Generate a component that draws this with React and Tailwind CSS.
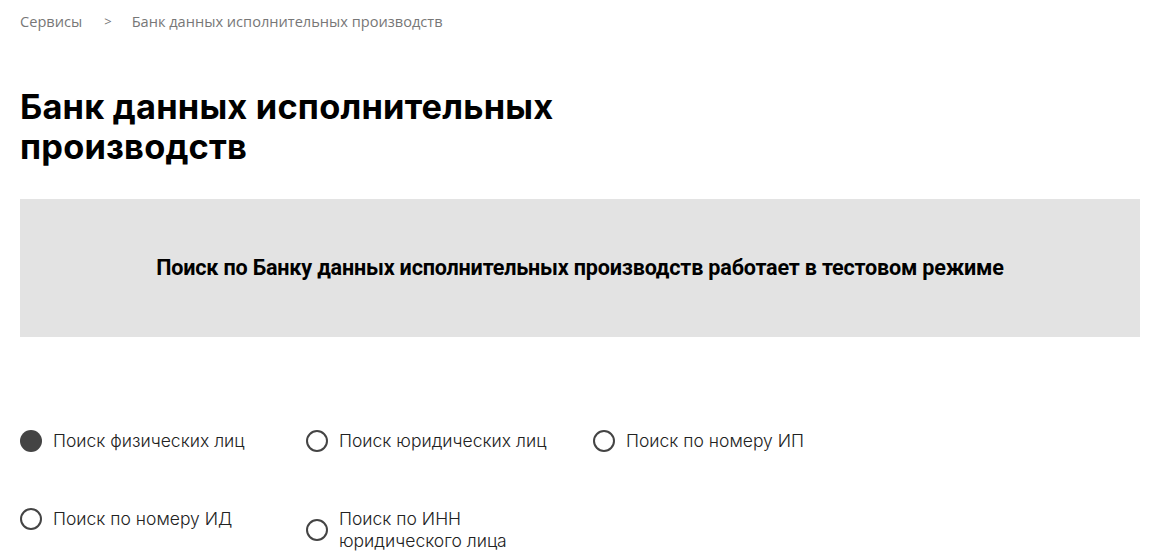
import React from "react";

function Radio({ checked, label }) {
  return (
    <label className="flex items-center gap-[11px] cursor-pointer">
      <span
        className={
          "w-[22px] h-[22px] shrink-0 rounded-full " +
          (checked ? "bg-[#444444]" : "border-2 border-[#444444] bg-white")
        }
      />
      <span className="text-[17.5px] leading-[22px] text-[#222222] font-light [font-family:Inter,'Noto_Sans',sans-serif]">
        {label}
      </span>
    </label>
  );
}

export default function App() {
  return (
    <div className="w-[1160px] h-[560px] bg-white overflow-hidden px-5">
      <nav className="flex items-center pt-[11px] text-[14.6px] leading-[20px] text-[#777777] [font-family:'Open_Sans',sans-serif]">
        <span>Сервисы</span>
        <span className="ml-[22px] mr-[20px] text-[13px]">&gt;</span>
        <span>Банк данных исполнительных производств</span>
      </nav>

      <h1 className="mt-[56px] text-[34.4px] leading-[40px] font-bold text-black [font-family:Inter,sans-serif] w-[580px] tracking-[0.2px]">
        Банк данных исполнительных производств
      </h1>

      <div className="mt-[32px] h-[138px] bg-[#e3e3e3] flex items-center justify-center">
        <p className="text-[21.6px] font-bold text-black [font-family:Roboto,sans-serif] tracking-[-0.2px]">
          Поиск по Банку данных исполнительных производств работает в тестовом режиме
        </p>
      </div>

      <div className="mt-[93px] grid grid-cols-[286px_287px_287px] gap-y-[56px] items-start">
        <Radio checked label="Поиск физических лиц" />
        <Radio label="Поиск юридических лиц" />
        <Radio label="Поиск по номеру ИП" />
        <Radio label="Поиск по номеру ИД" />
        <Radio
          label={
            <>
              Поиск по ИНН
              <br />
              юридического лица
            </>
          }
        />
      </div>
    </div>
  );
}
